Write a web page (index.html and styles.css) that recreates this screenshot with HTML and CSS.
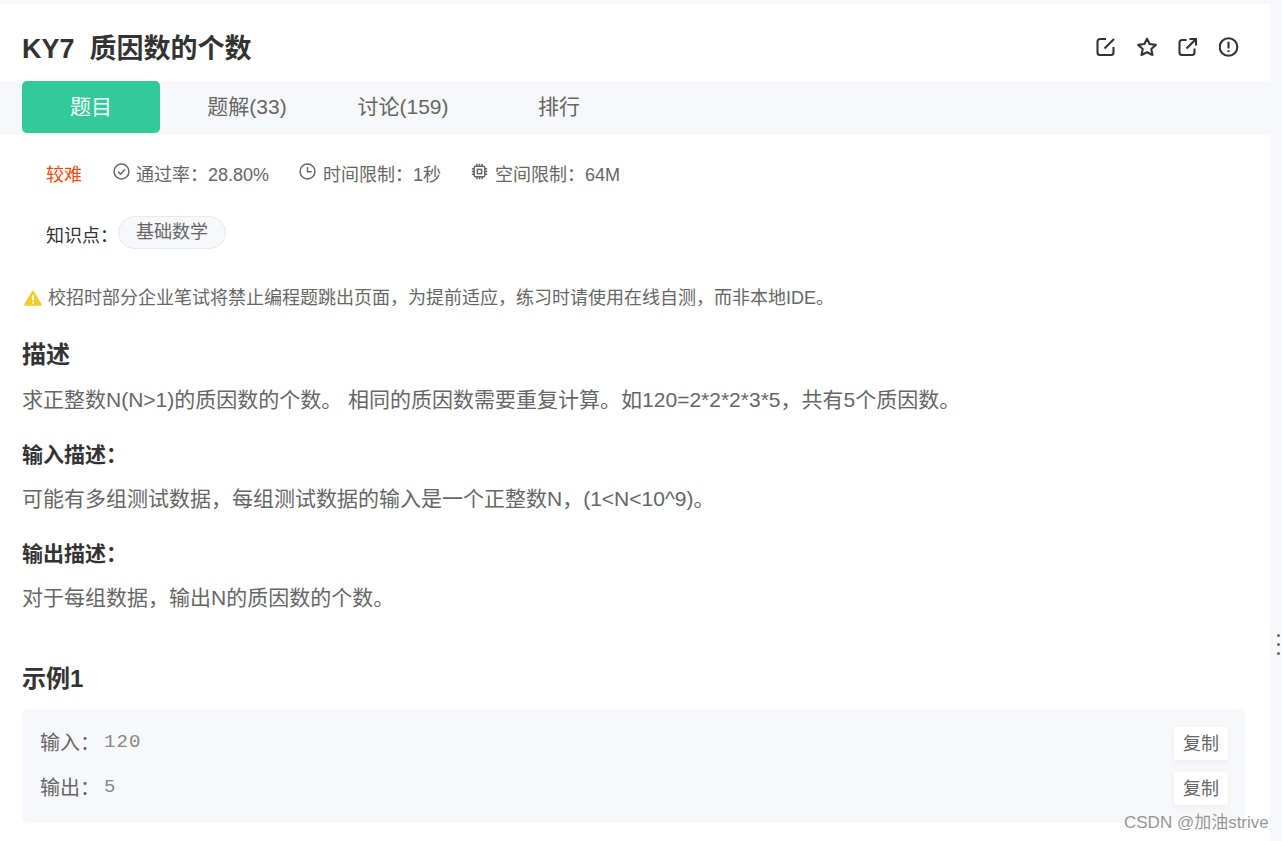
FILE: index.html
```html
<!DOCTYPE html>
<html lang="zh">
<head>
<meta charset="utf-8">
<title>KY7 质因数的个数</title>
<link rel="stylesheet" href="styles.css">
</head>
<body>
<main class="panel">
  <header class="head">
    <h1 class="title">KY7&nbsp;&nbsp;质因数的个数</h1>
    <div class="actions">
      <svg class="act" viewBox="0 0 20 20"><path d="M10 2H4a2.500 2.500 0 0 0-2.500 2.500v11A2.500 2.500 0 0 0 4 18h11a2.500 2.500 0 0 0 2.500-2.500V10" /><path d="M8.500 11.500 18 2" /></svg>
      <svg class="act" viewBox="0 0 20 20"><path d="M10 1.800 12.600 7 18.800 7.900 14.300 12 15.500 18 10 15.200 4.500 18 5.700 12 1.200 7.900 7.400 7Z" stroke-linejoin="round"/></svg>
      <svg class="act" viewBox="0 0 20 20"><path d="M8.500 3H4A2.500 2.500 0 0 0 1.500 5.500v10A2.500 2.500 0 0 0 4 18h10a2.500 2.500 0 0 0 2.500-2.500V11.500" /><path d="M8.500 11.500 17.500 2.500" /><path d="M11.500 2H18V8.500" /></svg>
      <svg class="act" viewBox="0 0 20 20"><circle cx="9.500" cy="10" r="8.800"/><path d="M9.500 4.800v6.700" /><path d="M9.500 13.300v1.800" /></svg>
    </div>
  </header>
  <nav class="tabs">
    <a class="tab tab-on">题目</a>
    <a class="tab tab-wide">题解(33)</a>
    <a class="tab">讨论(159)</a>
    <a class="tab tab-wide">排行</a>
  </nav>
  <section class="meta">
    <span class="hard">较难</span>
    <span class="stat s1"><svg class="ico" viewBox="0 0 16 16"><circle cx="8" cy="8" r="7"/><path d="M4.800 8.200 7.200 10.500 11.300 5.800"/></svg>通过率：28.80%</span>
    <span class="stat s2"><svg class="ico" viewBox="0 0 16 16"><circle cx="8" cy="8" r="7"/><path d="M8 3.800V8.300H12"/></svg>时间限制：1秒</span>
    <span class="stat s3"><svg class="ico" viewBox="0 0 16 16"><rect x="3" y="3" width="10" height="10" rx="1.500"/><rect x="6" y="6" width="4" height="4"/><path d="M5.500 .8V3M8 .8V3M10.500 .8V3M5.500 13V15.200M8 13V15.200M10.500 13V15.200M.8 5.500H3M.8 8H3M.8 10.500H3M13 5.500H15.200M13 8H15.200M13 10.500H15.200"/></svg>空间限制：64M</span>
  </section>
  <section class="know">
    <span class="know-l">知识点：</span><span class="chip">基础数学</span>
  </section>
  <p class="warn"><svg class="warn-i" viewBox="0 0 18 16"><path d="M9 .5a1 1 0 0 1 .9.5l7.800 13.300a1 1 0 0 1-.9 1.500H1.200a1 1 0 0 1-.9-1.500L8.100 1A1 1 0 0 1 9 .5Z"/><path class="warn-m" d="M8.100 5.200h1.800v5.300H8.100ZM8.100 11.800h1.800v1.800H8.100Z"/></svg>校招时部分企业笔试将禁止编程题跳出页面，为提前适应，练习时请使用在线自测，而非本地IDE。</p>
  <h2 class="h-desc">描述</h2>
  <p class="txt">求正整数N(N&gt;1)的质因数的个数。 相同的质因数需要重复计算。如120=2*2*2*3*5，共有5个质因数。</p>
  <h3 class="h-sub">输入描述：</h3>
  <p class="txt">可能有多组测试数据，每组测试数据的输入是一个正整数N，(1&lt;N&lt;10^9)。</p>
  <h3 class="h-sub">输出描述：</h3>
  <p class="txt">对于每组数据，输出N的质因数的个数。</p>
  <h2 class="h-ex">示例1</h2>
  <div class="sample">
    <div class="row"><span class="lab">输入：</span><code class="code">120</code><button class="copy">复制</button></div>
    <div class="row"><span class="lab">输出：</span><code class="code">5</code><button class="copy">复制</button></div>
  </div>
</main>
<aside class="dots"><i></i><i></i><i></i></aside>
<div class="mark">CSDN @加油strive</div>
</body>
</html>
```

FILE: styles.css
```css
* { box-sizing: border-box; }
html, body { margin: 0; height: 841px; overflow: hidden; }
body {
  background: #f7f8fa;
  padding-top: 4px;
  font-family: "Liberation Sans", "Noto Sans CJK SC", sans-serif;
  color: #666;
  position: relative;
}
.panel { width: 1270px; height: 837px; background: #fff; overflow: hidden; }
.head { height: 77px; padding: 0 31px 0 22px; display: flex; align-items: center; justify-content: space-between; }
.title { margin: 12px 0 0; font-size: 27px; line-height: 34px; font-weight: 700; color: #333; }
.actions { display: flex; gap: 21px; margin-top: 9px; }
.act { width: 20px; height: 20px; fill: none; stroke: #333; stroke-width: 2.100; }
.tabs { height: 54px; background: #f7f8fa; padding-left: 22px; display: flex; }
.tab { width: 138px; height: 52px; font-size: 21px; line-height: 52px; text-align: center; color: #666; border-radius: 5px; }
.tab-on { background: #32ca99; color: #fff; }
.tab-wide { width: 174px; }
.meta { height: 24px; margin-top: 26px; padding-left: 46px; display: flex; align-items: center; font-size: 18px; }
.hard { color: #f64a0a; width: 67px; font-size: 18px; }
.stat { display: flex; align-items: center; }
.s2, .s3 { margin-left: 30px; }
.ico { width: 17px; height: 17px; margin-right: 7px; margin-top: -3px; fill: none; stroke: #666; stroke-width: 1.400; flex: none; }
.s1 .ico { margin-right: 6px; }
.know { height: 33px; margin-top: 31px; padding-left: 46px; display: flex; align-items: center; }
.know-l { font-size: 18px; color: #333; margin-top: 2px; width: 72px; }
.chip { height: 33px; width: 108px; border: 1px solid #e8e8ea; background: #f7f8fa; border-radius: 17px; text-align: center; line-height: 31px; font-size: 18px; color: #666; }
.warn { margin: 36px 0 0; padding-left: 24px; height: 26px; font-size: 18px; line-height: 26px; display: flex; align-items: center; color: #666; }
.warn-i { width: 18px; height: 16px; margin-right: 6px; fill: #f4cd2d; flex: none; }
.warn-m { fill: #fff; }
h2, h3 { margin: 0; padding-left: 22px; color: #333; font-weight: 700; }
.h-desc { margin-top: 28px; margin-bottom: 14px; font-size: 24px; line-height: 32px; }
.txt { margin: 0; padding-left: 22px; font-size: 21px; line-height: 30px; color: #666; }
.h-sub { margin-top: 23px; margin-bottom: 12px; font-size: 21px; line-height: 34px; }
.h-ex { margin-top: 50px; font-size: 24px; line-height: 32px; }
.sample { width: 1224px; height: 114px; margin: 14px 0 0 22px; background: #f7f8fa; border-radius: 8px; padding: 18px 18px 0; display: flex; flex-direction: column; gap: 12px; }
.row { height: 33px; display: flex; align-items: center; }
.lab { font-size: 20px; color: #666; margin-top: -4px; }
.code { font-family: "Liberation Mono", monospace; font-size: 19px; color: #888; letter-spacing: 1.100px; margin: -3px 0 0 4px; }
.copy { margin-left: auto; width: 54px; height: 33px; padding: 0 0 4px; border: 0; background: #fff; border-radius: 3px; font: 18px "Liberation Sans", "Noto Sans CJK SC", sans-serif; color: #666; box-shadow: 0 2px 6px rgba(0,0,0,.05); }
.dots { position: absolute; left: 1277px; top: 634px; display: flex; flex-direction: column; gap: 6px; }
.dots i { width: 3px; height: 3px; background: #666; border-radius: 50%; }
.mark { position: absolute; left: 1124px; top: 812px; font-size: 17px; line-height: 22px; color: rgba(130,130,130,.85); white-space: nowrap; }
```
